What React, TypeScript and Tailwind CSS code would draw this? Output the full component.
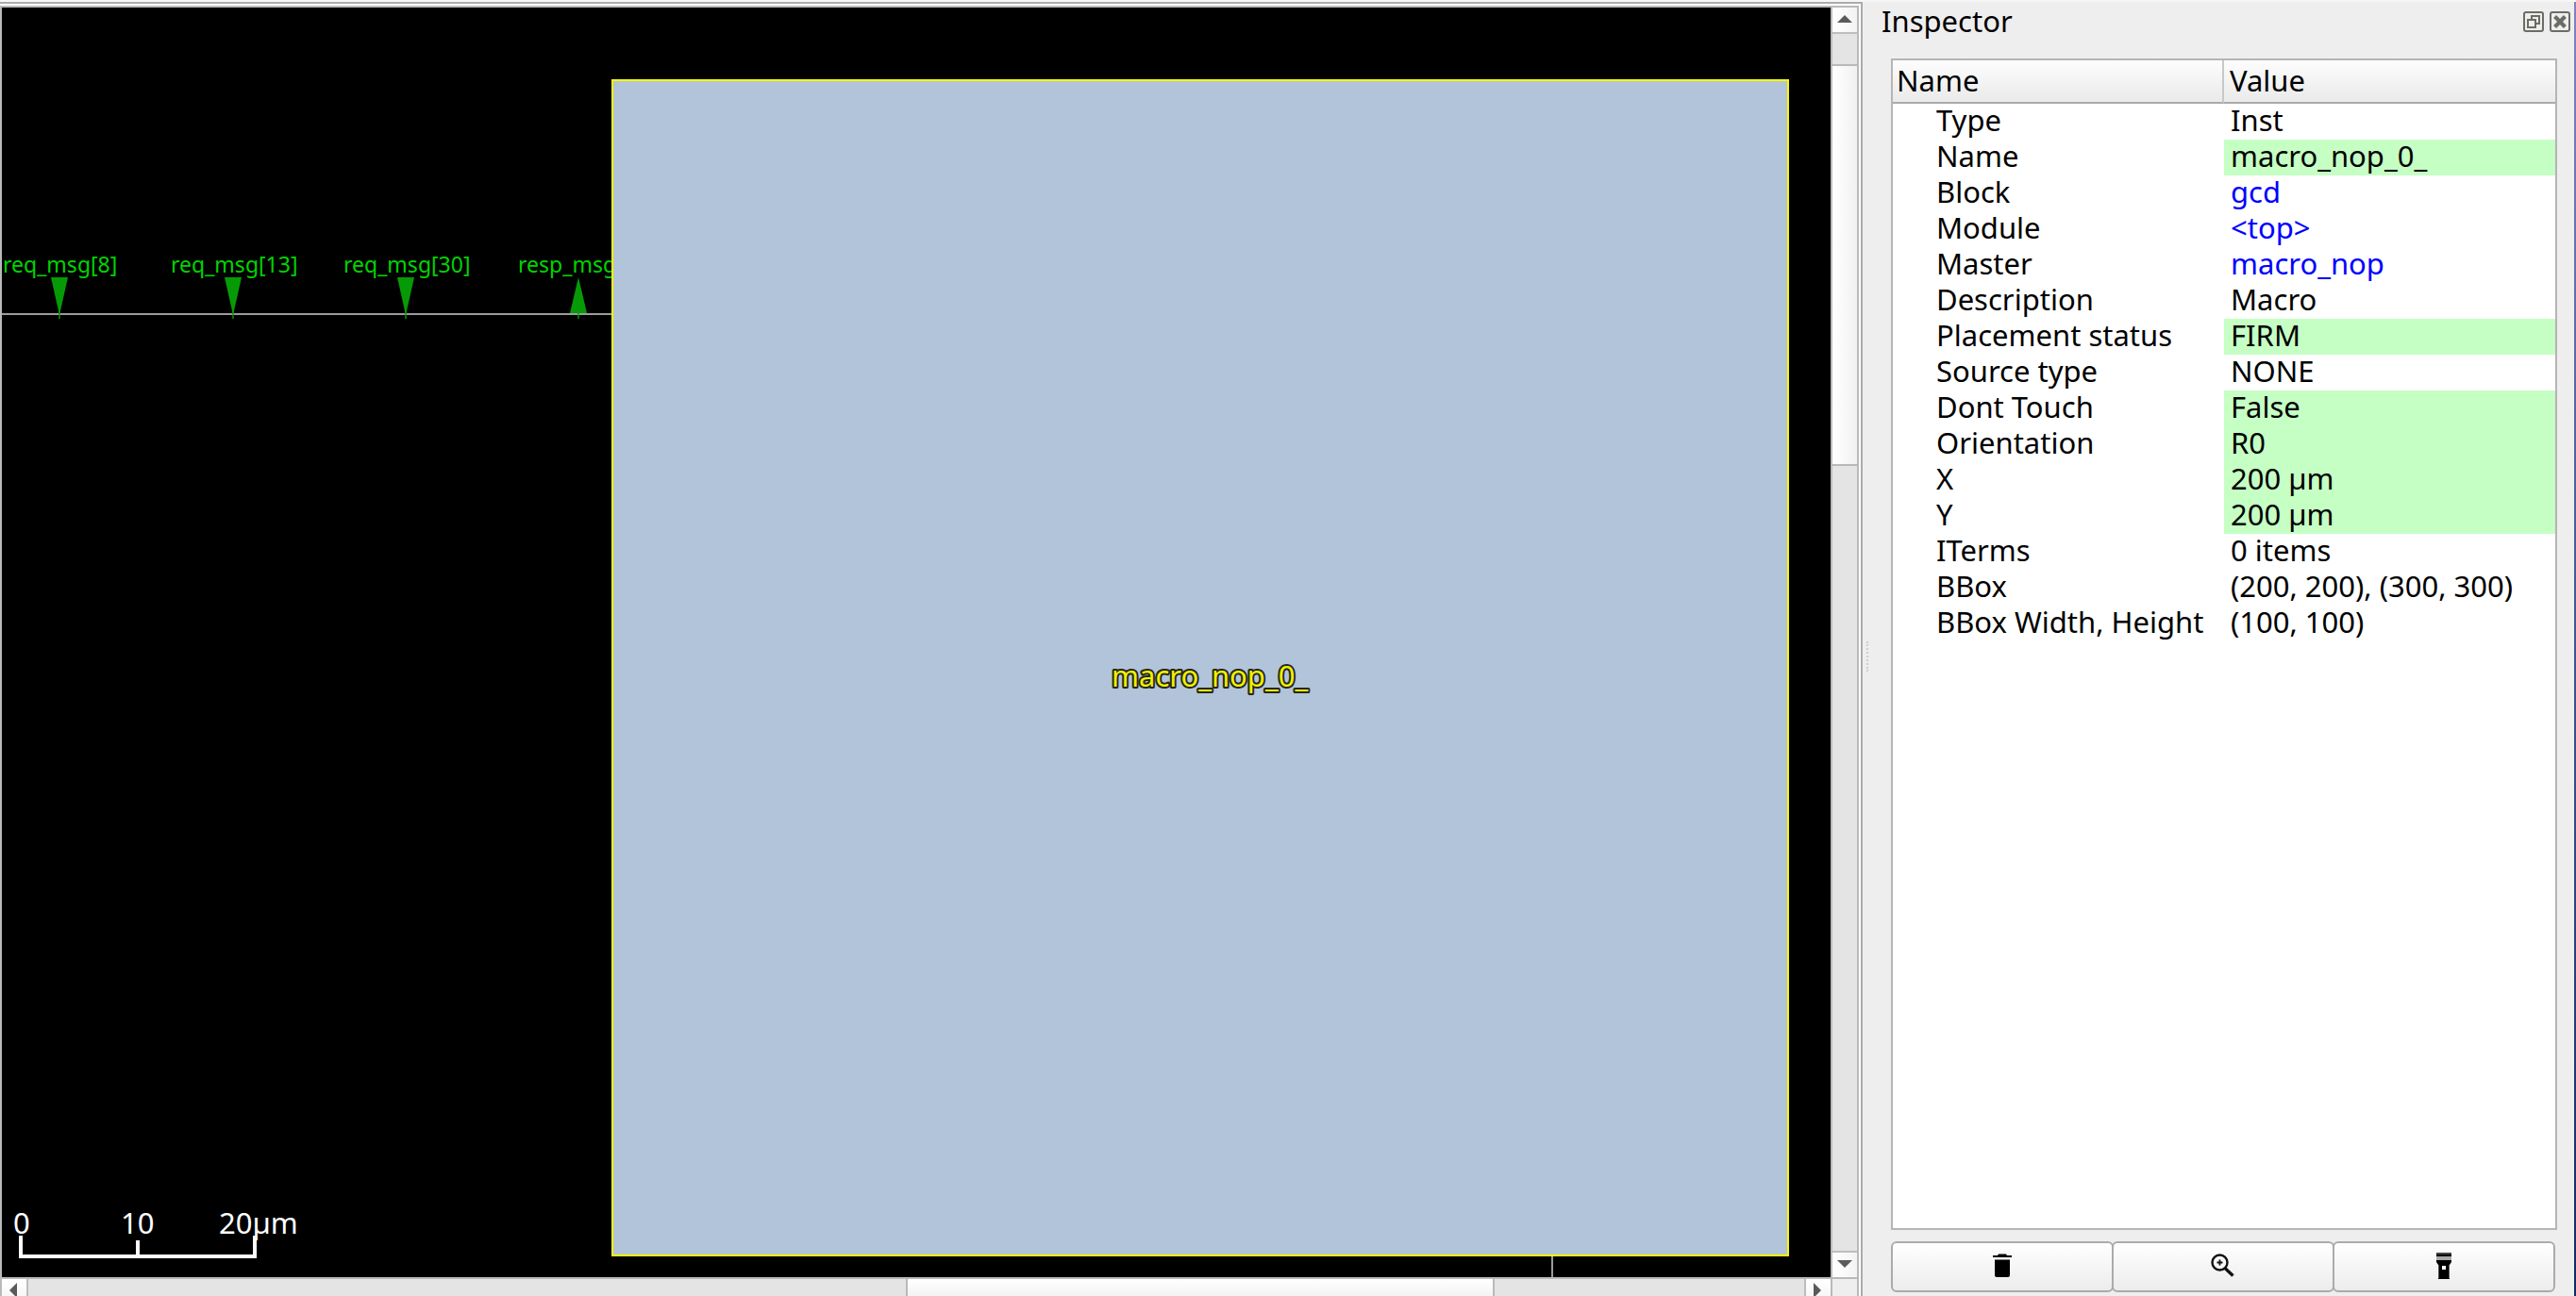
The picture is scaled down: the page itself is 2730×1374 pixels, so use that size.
import type { ReactNode } from "react";

type Kind = "plain" | "editable" | "link";
type Property = { name: string; value: string; kind: Kind };

const properties: Property[] = [
  { name: "Type", value: "Inst", kind: "plain" },
  { name: "Name", value: "macro_nop_0_", kind: "editable" },
  { name: "Block", value: "gcd", kind: "link" },
  { name: "Module", value: "<top>", kind: "link" },
  { name: "Master", value: "macro_nop", kind: "link" },
  { name: "Description", value: "Macro", kind: "plain" },
  { name: "Placement status", value: "FIRM", kind: "editable" },
  { name: "Source type", value: "NONE", kind: "plain" },
  { name: "Dont Touch", value: "False", kind: "editable" },
  { name: "Orientation", value: "R0", kind: "editable" },
  { name: "X", value: "200 µm", kind: "editable" },
  { name: "Y", value: "200 µm", kind: "editable" },
  { name: "ITerms", value: "0 items", kind: "plain" },
  { name: "BBox", value: "(200, 200), (300, 300)", kind: "plain" },
  { name: "BBox Width, Height", value: "(100, 100)", kind: "plain" },
];

const pins = [
  { label: "req_msg[8]", x: 61, textX: 1, input: true },
  { label: "req_msg[13]", x: 245, textX: 179, input: true },
  { label: "req_msg[30]", x: 428, textX: 362, input: true },
  { label: "resp_msg", x: 611, textX: 547, input: false },
];

function LayoutCanvas() {
  return (
    <svg className="block h-full w-full bg-black" role="img" aria-label="Layout view">
      <rect x="0" y="324" width="648" height="2" fill="#9c9c9c" />
      {pins.map((p) => (
        <g key={p.label}>
          <text x={p.textX} y="281" fontSize="23" fill="#00d400">
            {p.label}
          </text>
          {p.input ? (
            <polygon points={`${p.x - 9},286 ${p.x + 9},286 ${p.x},326`} fill="#069b06" />
          ) : (
            <polygon points={`${p.x - 9},324 ${p.x + 9},324 ${p.x},286`} fill="#069b06" />
          )}
          <rect x={p.x - 1} y="318" width="2" height="12" fill="#069b06" fillOpacity="0.7" />
        </g>
      ))}
      <rect x="1642" y="1324" width="2" height="22" fill="#9c9c9c" />
      <rect x="647" y="77" width="1246" height="1246" fill="#b1c4da" stroke="#f8f800" strokeWidth="2" />
      <text
        x="1176"
        y="720"
        fontSize="31"
        fill="#f0f000"
        stroke="#26261a"
        strokeWidth="4"
        strokeLinejoin="round"
        paintOrder="stroke"
      >
        macro_nop_0_
      </text>
      <g fill="#ffffff" fontSize="31">
        <text x="12" y="1300">0</text>
        <text x="126" y="1300">10</text>
        <text x="230" y="1300">20µm</text>
      </g>
      <path d="M20 1302V1324H268V1302M144 1307V1324" fill="none" stroke="#fff" strokeWidth="4" />
    </svg>
  );
}

function RestoreIcon() {
  return (
    <svg viewBox="0 0 11 11" className="h-[22px] w-[22px]" fill="none" stroke="#6c6c67">
      <rect x="0.5" y="0.5" width="10" height="10" rx="1" />
      <rect x="2.5" y="4.5" width="4" height="4" />
      <path d="M4.5 4V2.5H8.5V6.5H7" />
    </svg>
  );
}

function CloseIcon() {
  return (
    <svg viewBox="0 0 11 11" className="h-[22px] w-[22px]" fill="none" stroke="#6c6c67">
      <rect x="0.5" y="0.5" width="10" height="10" rx="1" />
      <path d="M2.8 2.8L8.2 8.2M8.2 2.8L2.8 8.2" strokeWidth="2.1" />
    </svg>
  );
}

function TrashIcon() {
  return (
    <svg viewBox="0 0 32 32" className="h-8 w-8">
      <path d="M6 4H11L12 2.5H20L21 4H26V6H6Z" />
      <path d="M8 8.5H24V25Q24 27 22 27H10Q8 27 8 25Z" />
    </svg>
  );
}

function ZoomIcon() {
  return (
    <svg viewBox="0 0 32 32" className="h-8 w-8" fill="none" stroke="#111">
      <circle cx="12.5" cy="11.5" r="8" strokeWidth="2.4" />
      <path d="M12.5 8.5V14.5M9.5 11.5H15.5" strokeWidth="1.8" />
      <path d="M18 17.5L26.5 25.5" strokeWidth="3.4" />
    </svg>
  );
}

function FlashlightIcon() {
  return (
    <svg viewBox="0 0 32 32" className="h-8 w-8">
      <rect x="8" y="1" width="16" height="2" fill="#444" />
      <rect x="8" y="3" width="16" height="2" />
      <rect x="8" y="5" width="16" height="4" fill="#a8a8a8" />
      <path d="M8 9H24V11L22 14V29H10V14L8 11Z" />
      <path d="M10.5 14V28M21.5 14V28" stroke="#555" />
      <rect x="14" y="15" width="4" height="4" fill="#fff" />
    </svg>
  );
}

function VerticalScrollbar() {
  return (
    <div role="scrollbar" aria-label="Vertical" aria-controls="layout" aria-valuenow={5} className="flex w-[30px] shrink-0 flex-col border-x-2 border-[#b9b9b9] bg-[#e4e4e4]">
      <button aria-label="Scroll up" className="flex h-7 shrink-0 justify-center border-b-2 border-[#bdbdbd] bg-linear-to-r from-white to-[#f3f3f3] pt-2">
        <svg viewBox="0 0 16 8" className="h-2 w-4" fill="#5a5a5a"><path d="M0 8L8 0L16 8Z" /></svg>
      </button>
      <div className="flex-[32]" />
      <div className="flex-[422] border-y-2 border-[#b9b9b9] bg-linear-to-r from-white to-[#f1f1f1]" />
      <div className="flex-[832]" />
      <button aria-label="Scroll down" className="flex h-7 shrink-0 justify-center border-t-2 border-[#bdbdbd] bg-linear-to-r from-white to-[#f3f3f3] pt-2">
        <svg viewBox="0 0 16 8" className="h-2 w-4" fill="#5a5a5a"><path d="M0 0L8 8L16 0Z" /></svg>
      </button>
    </div>
  );
}

function HorizontalScrollbar() {
  return (
    <div role="scrollbar" aria-label="Horizontal" aria-controls="layout" aria-valuenow={55} className="flex h-5 shrink-0 overflow-hidden border-t-2 border-[#b9b9b9] bg-[#e4e4e4]">
      <button aria-label="Scroll left" className="flex h-7 w-7 shrink-0 items-start border-r-2 border-[#bdbdbd] bg-linear-to-b from-white to-[#f3f3f3] pt-1 pl-2">
        <svg viewBox="0 0 8 16" className="h-4 w-2" fill="#5a5a5a"><path d="M8 0L0 8L8 16Z" /></svg>
      </button>
      <div className="flex-[930]" />
      <div className="flex-[620] border-x-2 border-[#b9b9b9] bg-linear-to-b from-white to-[#f3f3f3]" />
      <div className="flex-[328]" />
      <button aria-label="Scroll right" className="flex h-7 w-7 shrink-0 items-start border-l-2 border-[#bdbdbd] bg-linear-to-b from-white to-[#f3f3f3] pt-1 pl-2">
        <svg viewBox="0 0 8 16" className="h-4 w-2" fill="#5a5a5a"><path d="M0 0L8 8L0 16Z" /></svg>
      </button>
      <div className="w-[30px] shrink-0 border-x-2 border-[#b9b9b9] bg-[#eeeeee]" />
    </div>
  );
}

function ActionButton({ label, children }: { label: string; children: ReactNode }) {
  return (
    <button
      aria-label={label}
      className="-ml-0.5 flex flex-1 items-center justify-center rounded-md border-2 border-[#ababab] bg-linear-to-b from-white to-[#ececec]"
    >
      {children}
    </button>
  );
}

function Value({ property }: { property: Property }) {
  if (property.kind === "link") {
    return (
      <a href="#" className="text-[#0000ff]">
        {property.value}
      </a>
    );
  }
  return <>{property.value}</>;
}

function Inspector() {
  return (
    <aside className="flex w-[756px] shrink-0">
      <div className="flex w-[30px] shrink-0 items-center pl-1">
        <div className="h-12 pt-4" aria-hidden="true">
          <div className="h-8 border-l-2 border-dotted border-[#cfcfcf]" />
        </div>
      </div>
      <div className="flex min-w-0 flex-1 flex-col pb-1">
        <header className="-ml-3 flex h-[60px] shrink-0 items-start justify-between pl-0.5">
          <h1 className="leading-10">Inspector</h1>
          <div className="flex gap-[6px] pt-[10px] pr-1">
            <button aria-label="Float">
              <RestoreIcon />
            </button>
            <button aria-label="Close">
              <CloseIcon />
            </button>
          </div>
        </header>
        <div className="mr-[18px] flex-1 border-2 border-[#b5b5b5] bg-white">
          <table className="w-full table-fixed border-separate border-spacing-0 text-left">
            <thead>
              <tr className="bg-linear-to-b from-[#fdfdfd] to-[#e9e9e9]">
                <th className="w-1/2 border-r-2 border-b-2 border-r-[#c8c8c8] border-b-[#ababab] pb-0.5 pl-1 leading-[42px] font-normal">Name</th>
                <th className="border-b-2 border-[#ababab] pb-0.5 pl-1.5 leading-[42px] font-normal">Value</th>
              </tr>
            </thead>
            <tbody>
              {properties.map((p) => (
                <tr key={p.name}>
                  <td className="pb-1 pl-[46px] leading-[34px] whitespace-nowrap">{p.name}</td>
                  <td className={p.kind === "editable" ? "bg-[#c5ffc4] pb-1 pl-[7px] leading-[34px]" : "pb-1 pl-[7px] leading-[34px]"}>
                    <Value property={p} />
                  </td>
                </tr>
              ))}
            </tbody>
          </table>
        </div>
        <div className="mt-3 mr-5 flex h-[54px] shrink-0 pl-0.5">
          <ActionButton label="Delete">
            <TrashIcon />
          </ActionButton>
          <ActionButton label="Zoom to">
            <ZoomIcon />
          </ActionButton>
          <ActionButton label="Highlight">
            <FlashlightIcon />
          </ActionButton>
        </div>
      </div>
      <div className="-mt-0.5 w-0.5 shrink-0 bg-linear-to-b from-[#8381bd] via-[#3d5590] to-[#0f2c5e]" />
    </aside>
  );
}

export default function App() {
  return (
    <div className="flex h-screen overflow-hidden border-t-2 border-[#f6f6f6] bg-[#eeeeee] font-['Noto_Sans',sans-serif] text-[31px] text-black">
      <main className="flex min-w-0 flex-1 border-t-2 border-r-2 border-[#ababab] bg-white pt-0.5 pr-0.5">
        <div className="flex min-w-0 flex-1 flex-col border-t-2 border-l-2 border-[#b9b9b9]">
          <div className="flex min-h-0 flex-1">
            <div id="layout" className="min-w-0 flex-1 overflow-hidden">
              <LayoutCanvas />
            </div>
            <VerticalScrollbar />
          </div>
          <HorizontalScrollbar />
        </div>
      </main>
      <Inspector />
    </div>
  );
}
